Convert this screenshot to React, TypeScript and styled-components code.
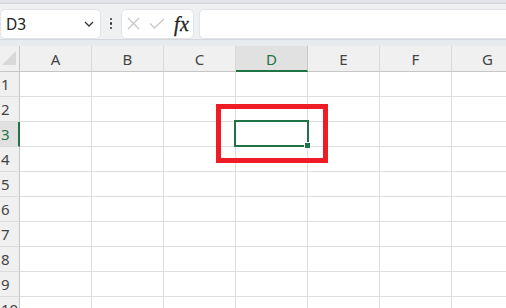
import React from 'react';
import styled, { createGlobalStyle } from 'styled-components';

const GlobalStyle = createGlobalStyle`
  html, body {
    margin: 0;
    padding: 0;
    background: #ffffff;
    overflow: hidden;
  }
  * {
    box-sizing: border-box;
  }
`;

const colors = {
  green: '#217346',
  grid: '#dedede',
  headerBg: '#f0f0f0',
  headerLine: '#c6c6c6',
  selectedHeader: '#e1e1e1',
  label: '#444444',
  barBg: '#eef0f2',
  red: '#ee1c24',
};

const FONT = `"Segoe UI", "Noto Sans", "Open Sans", sans-serif`;

const Window = styled.div`
  position: relative;
  width: 506px;
  height: 308px;
  overflow: hidden;
  font-family: ${FONT};
  background: #ffffff;
`;

const RibbonEdge = styled.div`
  height: 4px;
  background: linear-gradient(#e6e8eb, #dcdee1);
  border-bottom: 1px solid #d3d5d8;
`;

const FormulaBar = styled.div`
  display: flex;
  align-items: center;
  height: 36px;
  padding: 5px 0 1px 0;
  background: ${colors.barBg};
  border-bottom: 1px solid #d4d7db;
`;

const Panel = styled.div<{ $width?: number; $grow?: boolean }>`
  display: flex;
  align-items: center;
  height: 30px;
  background: #ffffff;
  border: 1px solid #e2e4e7;
  border-radius: 5px;
  ${({ $width }) => ($width ? `width: ${$width}px;` : '')}
  ${({ $grow }) => ($grow ? 'flex: 1; margin-right: -6px;' : '')}
`;

const NameText = styled.span`
  flex: 1;
  padding-left: 5px;
  font-size: 15.5px;
  color: #222222;
`;

const Chevron = styled.svg`
  margin-right: 6px;
`;

const Grip = styled.div`
  display: flex;
  flex-direction: column;
  gap: 2px;
  width: 20px;
  align-items: center;
  span {
    width: 2.5px;
    height: 2.5px;
    border-radius: 50%;
    background: #333333;
  }
`;

const Gap = styled.div`
  width: 5px;
`;

const IconRow = styled.div`
  display: flex;
  align-items: center;
  padding-left: 5px;
  gap: 9px;
`;

const Fx = styled.span`
  font-family: "Liberation Serif", "DejaVu Serif", serif;
  font-style: italic;
  font-size: 20px;
  line-height: 1;
  color: #222222;
  letter-spacing: 0.5px;
  -webkit-text-stroke: 0.3px #222222;
`;

const Band = styled.div`
  height: 6px;
  background: #e8ebee;
`;

const Sheet = styled.div`
  display: grid;
  grid-template-columns: 20px repeat(7, 72px);
  grid-template-rows: 26px repeat(10, 25px);
`;

const Corner = styled.div`
  position: relative;
  background: ${colors.headerBg};
  border-right: 1px solid ${colors.headerLine};
  border-bottom: 1px solid ${colors.headerLine};
  &::after {
    content: '';
    position: absolute;
    right: 3px;
    bottom: 6px;
    width: 0;
    height: 0;
    border-left: 14px solid transparent;
    border-bottom: 14px solid #d8d8d8;
  }
`;

const ColHeader = styled.div<{ $active?: boolean }>`
  display: flex;
  align-items: center;
  justify-content: center;
  font-size: 15px;
  color: ${({ $active }) => ($active ? colors.green : colors.label)};
  background: ${({ $active }) => ($active ? colors.selectedHeader : colors.headerBg)};
  border-right: 1px solid ${({ $active }) => ($active ? '#c8c8c8' : '#dadada')};
  border-bottom: ${({ $active }) =>
    $active ? `2px solid ${colors.green}` : `1px solid ${colors.headerLine}`};
  padding-top: ${({ $active }) => ($active ? '1px' : '0')};
`;

const RowHeader = styled.div<{ $active?: boolean }>`
  display: flex;
  align-items: center;
  padding-left: 1px;
  font-size: 15px;
  color: ${({ $active }) => ($active ? colors.green : colors.label)};
  background: ${({ $active }) => ($active ? colors.selectedHeader : colors.headerBg)};
  border-right: ${({ $active }) =>
    $active ? `2px solid ${colors.green}` : `1px solid ${colors.headerLine}`};
  border-bottom: 1px solid #dadada;
`;

const Cell = styled.div`
  position: relative;
  border-right: 1px solid ${colors.grid};
  border-bottom: 1px solid ${colors.grid};
`;

const Selection = styled.div`
  position: absolute;
  top: -2px;
  left: -2px;
  right: -2px;
  bottom: -1px;
  border: 2px solid ${colors.green};
  z-index: 2;
`;

const FillHandle = styled.div`
  position: absolute;
  right: -4px;
  bottom: -4px;
  width: 7px;
  height: 7px;
  background: ${colors.green};
  border: 1px solid #ffffff;
`;

const Highlight = styled.div`
  position: absolute;
  left: 216px;
  top: 104px;
  width: 112px;
  height: 59px;
  border: 5px solid ${colors.red};
  z-index: 3;
`;

const columns = ['A', 'B', 'C', 'D', 'E', 'F', 'G'];
const rows = [1, 2, 3, 4, 5, 6, 7, 8, 9, 10];
const active = { col: 'D', row: 3 };

export default function App() {
  return (
    <Window>
      <GlobalStyle />
      <RibbonEdge />
      <FormulaBar>
        <Panel $width={101}>
          <NameText>{`${active.col}${active.row}`}</NameText>
          <Chevron width="10" height="6" viewBox="0 0 10 6">
            <path d="M1 1l4 4 4-4" fill="none" stroke="#333" strokeWidth="1.3" />
          </Chevron>
        </Panel>
        <Grip>
          <span />
          <span />
          <span />
        </Grip>
        <Panel $width={73}>
          <IconRow>
            <svg width="13" height="13" viewBox="0 0 13 13">
              <path d="M1 1l11 11M12 1L1 12" stroke="#c4c4c4" strokeWidth="1.2" fill="none" />
            </svg>
            <svg width="16" height="11" viewBox="0 0 16 11">
              <path d="M1 5.5l4.5 4.5L15 1" stroke="#c4c4c4" strokeWidth="1.2" fill="none" />
            </svg>
            <Fx>fx</Fx>
          </IconRow>
        </Panel>
        <Gap />
        <Panel $grow />
      </FormulaBar>
      <Band />
      <Sheet>
        <Corner />
        {columns.map((c) => (
          <ColHeader key={c} $active={c === active.col}>
            {c}
          </ColHeader>
        ))}
        {rows.map((r) => (
          <React.Fragment key={r}>
            <RowHeader $active={r === active.row}>{r}</RowHeader>
            {columns.map((c) => (
              <Cell key={c}>
                {r === active.row && c === active.col && (
                  <Selection>
                    <FillHandle />
                  </Selection>
                )}
              </Cell>
            ))}
          </React.Fragment>
        ))}
      </Sheet>
      <Highlight />
    </Window>
  );
}
